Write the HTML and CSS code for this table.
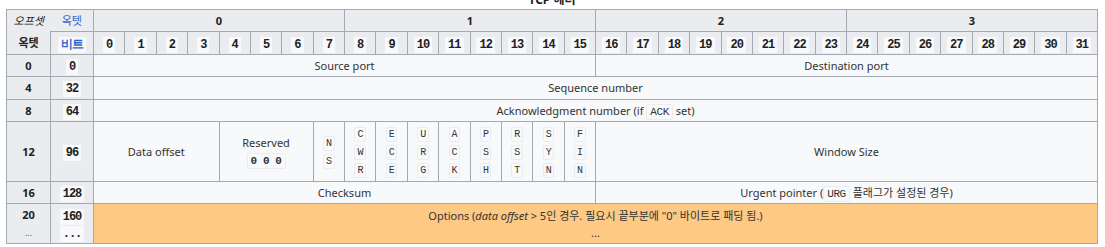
FILE: index.html
```html
<!DOCTYPE html>
<html lang="ko">
<head>
    <meta charset="UTF-8">
    <title>TCP 헤더</title>
<link rel="stylesheet" href="styles.css">
</head>
<body>
    <div class="page">
        <table class="wikitable tcp">
            <caption>TCP 헤더</caption>
            <colgroup>
                <col class="col-octet">
                <col class="col-bit">
                <col><col><col><col><col><col><col><col>
                <col><col><col><col><col><col><col><col>
                <col><col><col><col><col><col><col><col>
                <col><col><col><col><col><col><col><col>
            </colgroup>
            <tr class="row">
                <th class="corner-tl"><i>오프셋</i></th>
                <th class="corner-tr"><a href="#">옥텟</a></th>
                <th colspan="8">0</th>
                <th colspan="8">1</th>
                <th colspan="8">2</th>
                <th colspan="8">3</th>
            </tr>
            <tr class="row bits">
                <th>옥텟</th>
                <th><code><a href="#">비트</a></code></th>
                <th><code>0</code></th><th><code>1</code></th><th><code>2</code></th><th><code>3</code></th>
                <th><code>4</code></th><th><code>5</code></th><th><code>6</code></th><th><code>7</code></th>
                <th><code>8</code></th><th><code>9</code></th><th><code>10</code></th><th><code>11</code></th>
                <th><code>12</code></th><th><code>13</code></th><th><code>14</code></th><th><code>15</code></th>
                <th><code>16</code></th><th><code>17</code></th><th><code>18</code></th><th><code>19</code></th>
                <th><code>20</code></th><th><code>21</code></th><th><code>22</code></th><th><code>23</code></th>
                <th><code>24</code></th><th><code>25</code></th><th><code>26</code></th><th><code>27</code></th>
                <th><code>28</code></th><th><code>29</code></th><th><code>30</code></th><th><code>31</code></th>
            </tr>
            <tr class="row">
                <th>0</th>
                <th><code>0</code></th>
                <td colspan="16">Source port</td>
                <td colspan="16">Destination port</td>
            </tr>
            <tr class="row">
                <th>4</th>
                <th><code>32</code></th>
                <td colspan="32">Sequence number</td>
            </tr>
            <tr class="row">
                <th>8</th>
                <th><code>64</code></th>
                <td colspan="32">Acknowledgment number (if <code>ACK</code> set)</td>
            </tr>
            <tr class="flags-row">
                <th>12</th>
                <th><code>96</code></th>
                <td colspan="4">Data offset</td>
                <td colspan="3">Reserved<br><code class="zeros">0 0 0</code></td>
                <td class="flag"><code>N</code><br><code>S</code></td>
                <td class="flag"><code>C</code><br><code>W</code><br><code>R</code></td>
                <td class="flag"><code>E</code><br><code>C</code><br><code>E</code></td>
                <td class="flag"><code>U</code><br><code>R</code><br><code>G</code></td>
                <td class="flag"><code>A</code><br><code>C</code><br><code>K</code></td>
                <td class="flag"><code>P</code><br><code>S</code><br><code>H</code></td>
                <td class="flag"><code>R</code><br><code>S</code><br><code>T</code></td>
                <td class="flag"><code>S</code><br><code>Y</code><br><code>N</code></td>
                <td class="flag"><code>F</code><br><code>I</code><br><code>N</code></td>
                <td colspan="16">Window Size</td>
            </tr>
            <tr class="row">
                <th>16</th>
                <th><code>128</code></th>
                <td colspan="16">Checksum</td>
                <td colspan="16">Urgent pointer (<code>URG</code> 플래그가 설정된 경우)</td>
            </tr>
            <tr class="options-row">
                <th>20<br><span class="more">...</span></th>
                <th><code>160</code><br><code>...</code></th>
                <td colspan="32" class="options">Options (<i>data offset</i> &gt; 5인 경우. 필요시 끝부분에 "0" 바이트로 패딩 됨.)<br>...</td>
            </tr>
        </table>
    </div>
</body>
</html>
```

FILE: styles.css
```css
/* General */
body {
    margin: 0;
    padding: 0;
    background-color: #ffffff;
    color: #202122;
    font-family: "Noto Sans", "Noto Sans CJK KR", sans-serif;
    font-size: 11px;
}

.page {
    margin-top: -8px;
    padding: 0 6px;
}

a {
    color: #3366cc;
    text-decoration: none;
}

/* Wikitable */
.wikitable {
    border-collapse: collapse;
    background-color: #f8f9fa;
    color: #202122;
    border: 1px solid #a2a9b1;
}

.wikitable caption {
    font-weight: bold;
    font-size: 12px;
    line-height: 16px;
    padding-bottom: 1px;
}

.wikitable th,
.wikitable td {
    border: 1px solid #a2a9b1;
    padding: 0 4px;
    line-height: 17px;
    text-align: center;
    vertical-align: middle;
}

.wikitable td {
    color: #333333;
}

.wikitable th {
    background-color: #eaecf0;
    font-weight: bold;
}

.wikitable code {
    font-family: "Liberation Mono", "DejaVu Sans Mono", monospace;
    font-size: 11px;
    line-height: 1;
    letter-spacing: -0.4px;
    background-color: #f8f9fa;
    border: 1px solid #eaecf0;
    border-radius: 2px;
    padding: 1px 3px;
}

.wikitable th code {
    font-size: 12px;
    letter-spacing: -1px;
    font-weight: bold;
}

/* TCP header layout */
.tcp {
    width: 1092px;
    table-layout: fixed;
}

.col-octet {
    width: 44px;
}

.col-bit {
    width: 43px;
}

.tcp .row {
    height: 22.4px;
}

.tcp .flags-row {
    height: 60px;
}

.tcp .options-row {
    height: 40px;
}

.tcp .corner-tl {
    font-weight: normal;
    border-right-style: hidden;
    border-bottom-style: hidden;
}

.tcp .corner-tr {
    font-weight: normal;
}

.bits th {
    padding: 0;
}

.tcp .flag {
    padding: 0;
    line-height: 18px;
}

.flag code {
    font-size: 10px;
    padding: 1px 2px;
}

.zeros {
    font-weight: bold;
}

.more {
    font-size: 9px;
    font-weight: normal;
    color: #54595d;
}

.options {
    background-color: #fec984;
}
```
